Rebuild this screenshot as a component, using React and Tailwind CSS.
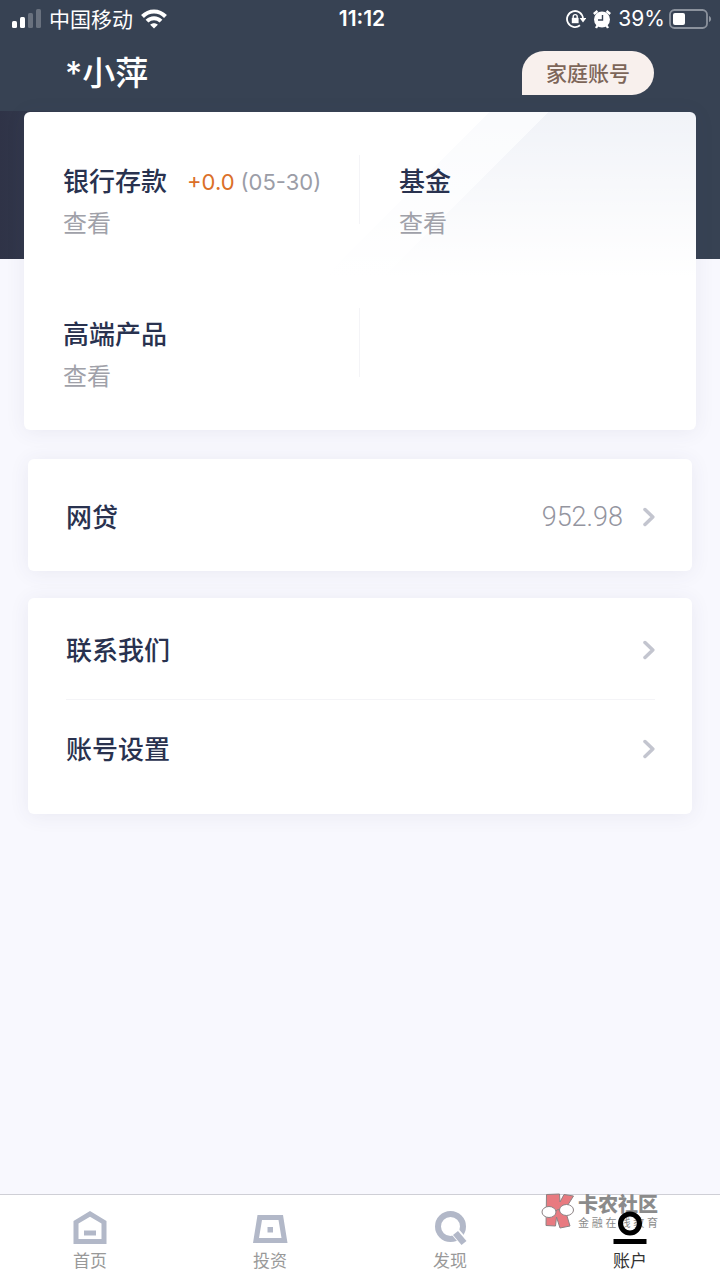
import React from 'react';

const holdings = [
  { id: 'deposit', name: '银行存款', change: '+0.0', date: '(05-30)', divider: true },
  { id: 'fund', name: '基金', divider: false },
  { id: 'premium', name: '高端产品', divider: true }
];

const HomeIcon = () => (
  <svg className="size-9" viewBox="0 0 36 36" fill="#b2b8c8">
    <path
      fillRule="evenodd"
      d="M18 1 34.500 11V34H1.500V11ZM18 6.800 6.500 13.600V29H29.500V13.600Z"
    />
    <path d="M12 20.500H24V25.500H12Z" />
  </svg>
);

const InvestIcon = () => (
  <svg className="size-9" viewBox="0 0 36 36" fill="#b2b8c8">
    <path fillRule="evenodd" d="M5.500 5H31L35.500 33H1ZM10 10 7 28H29.500L26.500 10Z" />
    <path d="M15.500 17H21V22.500H15.500Z" />
  </svg>
);

const DiscoverIcon = () => (
  <svg className="size-9" viewBox="0 0 36 36" fill="none">
    <circle cx="18.500" cy="16.500" r="12.500" stroke="#b2b8c8" strokeWidth="6" />
    <path d="M22 20.500 34 34.500" stroke="#fff" strokeWidth="9" />
    <path d="M23.500 23 32 33" stroke="#b2b8c8" strokeWidth="6.500" />
  </svg>
);

const AccountIcon = () => (
  <svg className="size-9" viewBox="0 0 36 36" fill="none">
    <circle cx="18" cy="13.500" r="9.500" stroke="#000" strokeWidth="5" />
    <path d="M1.500 29H34.500V34H1.500Z" fill="#000" />
  </svg>
);

const tabs = [
  { id: 'home', label: '首页', Icon: HomeIcon },
  { id: 'invest', label: '投资', Icon: InvestIcon },
  { id: 'discover', label: '发现', Icon: DiscoverIcon },
  { id: 'account', label: '账户', Icon: AccountIcon }
];

const StatusBar = () => (
  <div className="grid h-9 grid-cols-3 items-center pl-3 pr-2 text-[21px] leading-9">
    <div className="flex items-center gap-2">
      <svg className="h-5 w-[29px]" viewBox="0 0 29 20" fill="#fff">
        <rect x="0" y="12" width="5" height="7" rx="1.500" />
        <rect x="8" y="8" width="5" height="11" rx="1.500" />
        <rect x="16" y="4" width="5" height="15" rx="1.500" opacity="0.25" />
        <rect x="24" y="0" width="5" height="19" rx="1.500" opacity="0.25" />
      </svg>
      <span className="pt-0.5">中国移动</span>
      <svg className="h-5 w-[26px]" viewBox="0 0 26 20" fill="none" stroke="#fff" strokeWidth="4">
        <path d="M1.500 7.500C8 0.800 18 0.800 24.500 7.500" />
        <path d="M6 12.200C10 8.200 16 8.200 20 12.200" />
        <path d="M13 19.500 9.200 15.800C11.300 13.800 14.700 13.800 16.800 15.800Z" fill="#fff" stroke="none" />
      </svg>
    </div>
    <span className="text-center text-[21px] font-semibold leading-9">11:12</span>
    <div className="flex items-center justify-end gap-1.5">
      <svg className="size-5" viewBox="0 0 20 20" fill="none" stroke="#fff" strokeWidth="1.800">
        <path d="M14 16.300A8 8 0 1 1 17 9.500" />
        <path d="M13.600 9H20.400L17 13.500Z" fill="#fff" stroke="none" />
        <rect x="5.800" y="8.800" width="6.800" height="5.400" fill="#fff" stroke="none" />
        <path d="M7.200 9.500V7.600A2 2 0 0 1 11.200 7.600V9.500" strokeWidth="1.400" />
      </svg>
      <svg className="size-5" viewBox="0 0 20 20" fill="none">
        <circle cx="10" cy="10.500" r="8" fill="#fff" />
        <path d="M1.800 5 5.500 2M18.200 5 14.500 2M4 19 5.500 16.500M16 19 14.500 16.500" stroke="#fff" strokeWidth="2.400" />
        <path d="M10.500 6V11H6" stroke="#374253" strokeWidth="1.400" />
      </svg>
      <span>39%</span>
      <svg className="-ml-0.5 h-5 w-[43px]" viewBox="0 0 43 20" fill="none">
        <rect x="1" y="1" width="37" height="18" rx="4.500" stroke="#8b929d" strokeWidth="1.800" />
        <rect x="4" y="4" width="12" height="12" rx="2" fill="#fff" />
        <path d="M40 7C42.800 8 42.800 12 40 13Z" fill="#8b929d" />
      </svg>
    </div>
  </div>
);

const Chevron = () => (
  <svg className="h-5 w-3" viewBox="0 0 12 20" fill="none" stroke="#c3c5cf" strokeWidth="3.500">
    <path d="M2 2.500 9.800 10 2 17.500" strokeLinecap="round" strokeLinejoin="round" />
  </svg>
);

const Holding = ({ item }) => (
  <div className="flex justify-between pl-[39px]">
    <button type="button" className="flex flex-col items-start gap-1.5 pt-[9px] text-left">
      <span className="flex items-center whitespace-nowrap leading-9">
        <span className="text-[26px] font-medium text-[#29324f]">{item.name}</span>
        {item.change && <span className="ml-5 text-[22px] text-[#db6f28]">{item.change}</span>}
        {item.date && <span className="ml-1.5 text-[22px] text-[#9b9da7]">{item.date}</span>}
      </span>
      <span className="text-2xl leading-9 text-[#a0a1a9]">查看</span>
    </button>
    {item.divider && <span className="h-[69px] w-px bg-[#f4f4f7]" />}
  </div>
);

const MenuRow = ({ label, value }) => (
  <button type="button" className="flex w-full items-center text-left">
    <span className="flex-1 pt-0.5 text-[26px] font-medium leading-9 text-[#29324f]">{label}</span>
    {value && (
      <span className="mr-5 font-['Roboto'] text-[27px] font-light leading-9 text-[#94959f]">{value}</span>
    )}
    <Chevron />
  </button>
);

const Watermark = () => (
  <div className="pointer-events-none absolute -top-0.5 right-[62px] flex items-center gap-0.5">
    <svg className="h-9 w-[35px]" viewBox="0 0 35 36" stroke="#8d8284">
      <path
        d="M5.500 1.500 18.500 1 19 9 23 1.500 32.500 3 24 16.500 29 33 19 35 15.500 24 14.500 33 5 32.500Z"
        fill="#e87a80"
      />
      <ellipse cx="8" cy="19" rx="7" ry="5.500" fill="#fff" />
      <ellipse cx="25.500" cy="17" rx="7" ry="5.500" fill="#fff" />
      <path d="M15 18Q17 15.500 18.500 17" fill="none" />
    </svg>
    <div className="whitespace-nowrap text-[#8b8b8b]">
      <p className="text-xl font-black leading-6">卡农社区</p>
      <p className="flex justify-between text-[11px] leading-3">
        {['金', '融', '在', '线', '教', '育'].map((char) => (
          <span key={char}>{char}</span>
        ))}
      </p>
    </div>
  </div>
);

const App = () => {
  return (
    <div className="flex min-h-screen flex-col bg-[#f8f8fe] font-['Inter','Noto_Sans_CJK_SC',sans-serif]">
      <header className="h-[111px] bg-[#374253] text-white">
        <StatusBar />
        <div className="flex items-center justify-between pl-[65px] pr-[66px] pt-[15px]">
          <h1 className="text-[33px] font-medium leading-[44px]">*小萍</h1>
          <button
            type="button"
            className="h-11 rounded-full rounded-bl-none bg-[#f8f0ed] px-6 pt-0.5 text-[21px] font-medium text-[#7d6659]"
          >
            家庭账号
          </button>
        </div>
      </header>

      <main className="flex-1 bg-[linear-gradient(90deg,#2f3347,#374253_12%)] bg-[length:100%_148px] bg-no-repeat pt-px">
        <section className="mx-6 grid grid-cols-2 gap-y-[66px] rounded-md bg-white bg-[linear-gradient(to_bottom,transparent,#fff_52%),linear-gradient(135deg,#fff_47%,#fafbfd_47%,#fafbfd_53%,#f1f3f8_53%)] pb-[35px] pt-[43px] shadow-[0_2px_20px_rgba(60,60,100,0.08)]">
          {holdings.map((item) => (
            <Holding key={item.id} item={item} />
          ))}
        </section>

        <section className="mx-7 mt-[29px] flex h-28 items-center rounded-md bg-white pl-[38px] pr-[37px] pt-1 shadow-[0_2px_20px_rgba(60,60,100,0.08)]">
          <MenuRow label="网贷" value="952.98" />
        </section>

        <section className="mx-7 mt-[27px] rounded-md bg-white pb-4 pl-[38px] pr-[37px] pt-0.5 shadow-[0_2px_20px_rgba(60,60,100,0.08)]">
          <div className="flex h-25 border-b border-[#f4f4f7]">
            <MenuRow label="联系我们" />
          </div>
          <div className="flex h-[98px]">
            <MenuRow label="账号设置" />
          </div>
        </section>
      </main>

      <nav className="relative border-t border-[#cfcfd6] bg-white">
        <Watermark />
        <div className="relative grid grid-cols-4 pb-1.5 pt-[15px]">
          {tabs.map(({ id, label, Icon }) => (
            <button
              key={id}
              type="button"
              className={`flex flex-col items-center gap-0.5 text-[17px] leading-[26px] ${
                id === 'account' ? 'text-[#333333]' : 'text-[#999999]'
              }`}
            >
              <Icon />
              {label}
            </button>
          ))}
        </div>
      </nav>
    </div>
  );
};

export default App;
